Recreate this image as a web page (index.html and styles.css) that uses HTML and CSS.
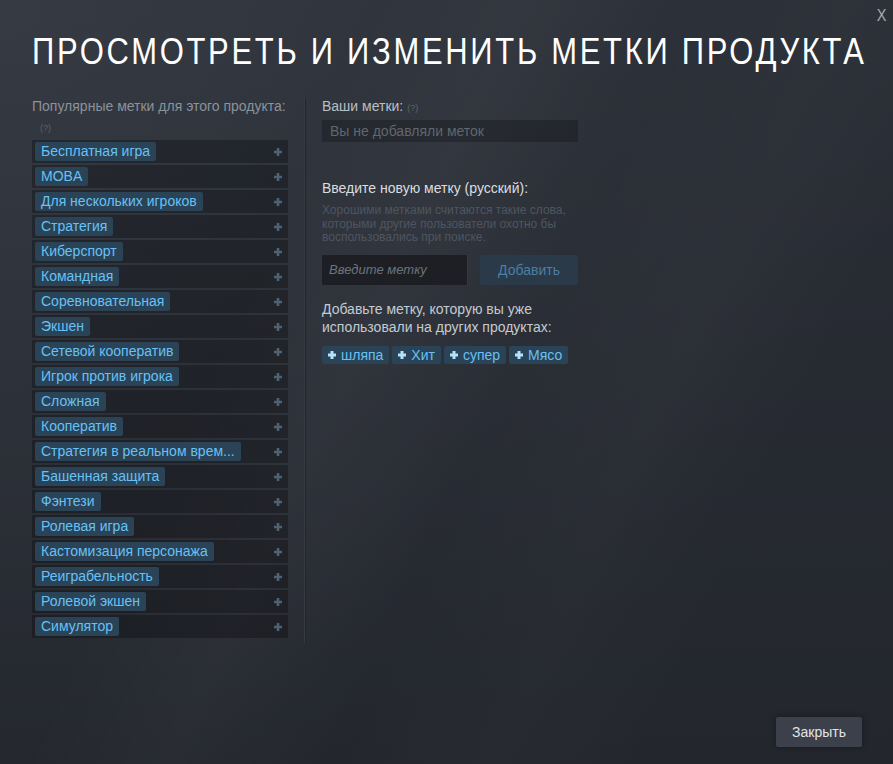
FILE: index.html
```html
<!DOCTYPE html>
<html lang="ru">
<head>
<meta charset="utf-8">
<title>Метки продукта</title>
<link rel="stylesheet" href="styles.css">
</head>
<body>
<div class="modal">
  <div class="close">X</div>
  <h1 class="title"><span class="title-text">ПРОСМОТРЕТЬ И ИЗМЕНИТЬ МЕТКИ ПРОДУКТА</span></h1>
  <div class="content">
    <div class="left">
      <div class="label">Популярные метки для этого продукта:</div>
      <div class="help help-left">(?)</div>
      <div class="tag-list">
        <div class="row"><span class="tag">Бесплатная игра</span><svg class="plus" viewBox="0 0 10 10"><path d="M5 1v8M1 5h8"/></svg></div>
        <div class="row"><span class="tag">MOBA</span><svg class="plus" viewBox="0 0 10 10"><path d="M5 1v8M1 5h8"/></svg></div>
        <div class="row"><span class="tag">Для нескольких игроков</span><svg class="plus" viewBox="0 0 10 10"><path d="M5 1v8M1 5h8"/></svg></div>
        <div class="row"><span class="tag">Стратегия</span><svg class="plus" viewBox="0 0 10 10"><path d="M5 1v8M1 5h8"/></svg></div>
        <div class="row"><span class="tag">Киберспорт</span><svg class="plus" viewBox="0 0 10 10"><path d="M5 1v8M1 5h8"/></svg></div>
        <div class="row"><span class="tag">Командная</span><svg class="plus" viewBox="0 0 10 10"><path d="M5 1v8M1 5h8"/></svg></div>
        <div class="row"><span class="tag">Соревновательная</span><svg class="plus" viewBox="0 0 10 10"><path d="M5 1v8M1 5h8"/></svg></div>
        <div class="row"><span class="tag">Экшен</span><svg class="plus" viewBox="0 0 10 10"><path d="M5 1v8M1 5h8"/></svg></div>
        <div class="row"><span class="tag">Сетевой кооператив</span><svg class="plus" viewBox="0 0 10 10"><path d="M5 1v8M1 5h8"/></svg></div>
        <div class="row"><span class="tag">Игрок против игрока</span><svg class="plus" viewBox="0 0 10 10"><path d="M5 1v8M1 5h8"/></svg></div>
        <div class="row"><span class="tag">Сложная</span><svg class="plus" viewBox="0 0 10 10"><path d="M5 1v8M1 5h8"/></svg></div>
        <div class="row"><span class="tag">Кооператив</span><svg class="plus" viewBox="0 0 10 10"><path d="M5 1v8M1 5h8"/></svg></div>
        <div class="row"><span class="tag">Стратегия в реальном врем...</span><svg class="plus" viewBox="0 0 10 10"><path d="M5 1v8M1 5h8"/></svg></div>
        <div class="row"><span class="tag">Башенная защита</span><svg class="plus" viewBox="0 0 10 10"><path d="M5 1v8M1 5h8"/></svg></div>
        <div class="row"><span class="tag">Фэнтези</span><svg class="plus" viewBox="0 0 10 10"><path d="M5 1v8M1 5h8"/></svg></div>
        <div class="row"><span class="tag">Ролевая игра</span><svg class="plus" viewBox="0 0 10 10"><path d="M5 1v8M1 5h8"/></svg></div>
        <div class="row"><span class="tag">Кастомизация персонажа</span><svg class="plus" viewBox="0 0 10 10"><path d="M5 1v8M1 5h8"/></svg></div>
        <div class="row"><span class="tag">Реиграбельность</span><svg class="plus" viewBox="0 0 10 10"><path d="M5 1v8M1 5h8"/></svg></div>
        <div class="row"><span class="tag">Ролевой экшен</span><svg class="plus" viewBox="0 0 10 10"><path d="M5 1v8M1 5h8"/></svg></div>
        <div class="row"><span class="tag">Симулятор</span><svg class="plus" viewBox="0 0 10 10"><path d="M5 1v8M1 5h8"/></svg></div>
      </div>
    </div>
    <div class="right">
      <div class="label light">Ваши метки: <span class="help">(?)</span></div>
      <div class="your-tags">Вы не добавляли меток</div>

      <div class="section-title">Введите новую метку (русский):</div>
      <div class="hint">Хорошими метками считаются такие слова, которыми другие пользователи охотно бы воспользовались при поиске.</div>
      <div class="add-row">
        <div class="input">Введите метку</div>
        <div class="add-btn">Добавить</div>
      </div>

      <div class="section-title prev">Добавьте метку, которую вы уже использовали на других продуктах:</div>
      <div class="prev-tags">
        <span class="tag ptag"><svg class="pplus" viewBox="0 0 10 10"><path d="M5 1v8M1 5h8"/></svg>шляпа</span>
        <span class="tag ptag"><svg class="pplus" viewBox="0 0 10 10"><path d="M5 1v8M1 5h8"/></svg>Хит</span>
        <span class="tag ptag"><svg class="pplus" viewBox="0 0 10 10"><path d="M5 1v8M1 5h8"/></svg>супер</span>
        <span class="tag ptag"><svg class="pplus" viewBox="0 0 10 10"><path d="M5 1v8M1 5h8"/></svg>Мясо</span>
      </div>
    </div>
  </div>
  <div class="footer">
    <div class="close-btn">Закрыть</div>
  </div>
</div>
</body>
</html>
```

FILE: styles.css
```css
html, body {
  margin: 0;
  padding: 0;
}
body {
  width: 893px;
  height: 764px;
  overflow: hidden;
  font-family: "Liberation Sans", Arial, sans-serif;
}
.modal {
  position: relative;
  width: 893px;
  height: 764px;
  box-sizing: border-box;
  overflow: hidden;
  background:
    linear-gradient(115deg, rgba(255,255,255,0) 30%, rgba(255,255,255,0.025) 42%, rgba(255,255,255,0) 55%, rgba(255,255,255,0.02) 68%, rgba(255,255,255,0) 80%),
    radial-gradient(circle at top left, rgba(74,81,92,0.35) 0%, rgba(75,81,92,0) 70%),
    linear-gradient(to bottom, #2a2e36 0%, #23262d 100%);
  display: flex;
  flex-direction: column;
}
.close {
  position: absolute;
  top: 6px;
  right: 6px;
  color: #a8acb2;
  font-size: 17px;
  transform: scaleX(0.85);
}
.title {
  margin: 32px 0 0 32px;
  font-weight: normal;
  font-size: 36px;
  line-height: 40px;
  color: #ffffff;
  white-space: nowrap;
  overflow: hidden;
}
.title-text {
  display: inline-block;
  letter-spacing: 3.15px;
  transform: scaleX(0.86);
  transform-origin: left center;
}
.content {
  display: flex;
  align-items: flex-start;
  margin: 26px 0 0 32px;
  flex: 1;
}
.left {
  width: 256px;
  padding-right: 16px;
  border-right: 1px solid #363a43;
  box-shadow: 1px 0 0 #22252b;
  padding-bottom: 4px;
}
.label {
  font-size: 14px;
  line-height: 17px;
  color: #8b929a;
  white-space: nowrap;
}
.label.light {
  color: #b8bfc6;
}
.help {
  font-size: 9px;
  color: #5c646d;
}
.help-left {
  display: block;
  margin: 7px 0 0 8px;
  line-height: 12px;
}
.tag-list {
  margin-top: 6px;
  display: flex;
  flex-direction: column;
  gap: 2px;
}
.row {
  height: 23px;
  background: rgba(0,0,0,0.28);
  display: flex;
  align-items: center;
  justify-content: space-between;
  padding: 0 3px;
}
.tag {
  display: inline-block;
  background: #2b4356;
  color: #67c1f5;
  font-size: 14px;
  line-height: 19px;
  height: 19px;
  padding: 0 6px;
  border-radius: 2px;
  white-space: nowrap;
}
.plus {
  width: 10px;
  height: 10px;
  margin-right: 2px;
  stroke: #4e6273;
  stroke-width: 2.6;
  fill: none;
}
.right {
  padding-left: 17px;
  width: 256px;
}
.your-tags {
  margin-top: 3px;
  height: 22px;
  line-height: 22px;
  background: rgba(0,0,0,0.22);
  color: #5f6770;
  font-size: 14px;
  padding-left: 8px;
}
.section-title {
  margin-top: 37px;
  font-size: 14px;
  line-height: 18px;
  color: #dadde0;
}
.hint {
  margin-top: 7px;
  font-size: 12px;
  line-height: 13.5px;
  color: #4d5661;
}
.add-row {
  display: flex;
  margin-top: 10px;
  gap: 12px;
}
.input {
  width: 146px;
  height: 30px;
  box-sizing: border-box;
  background: #1d1f24;
  border-right: 1px solid #3a3a35;
  color: #6c747c;
  font-style: italic;
  font-size: 13px;
  line-height: 30px;
  padding-left: 7px;
}
.add-btn {
  width: 98px;
  height: 30px;
  background: #2b3a49;
  color: #4b7ea3;
  font-size: 14px;
  line-height: 30px;
  text-align: center;
  border-radius: 2px;
}
.section-title.prev {
  margin-top: 15px;
  color: #c3cbd2;
}
.prev-tags {
  display: flex;
  gap: 3px;
  margin-top: 10px;
}
.ptag {
  height: 18px;
  line-height: 18px;
  padding: 0 6px 0 5px;
  display: inline-flex;
  align-items: center;
  gap: 4px;
}
.pplus {
  width: 10px;
  height: 10px;
  stroke: #b4e2fb;
  stroke-width: 3;
  fill: none;
}
.footer {
  display: flex;
  justify-content: flex-end;
  padding: 0 31px 17px 0;
}
.close-btn {
  width: 86px;
  height: 30px;
  line-height: 30px;
  background: #3b404b;
  color: #e1e4e8;
  font-size: 14px;
  text-align: center;
  border-radius: 2px;
  box-shadow: 0 0 6px rgba(0,0,0,0.35);
}
```
